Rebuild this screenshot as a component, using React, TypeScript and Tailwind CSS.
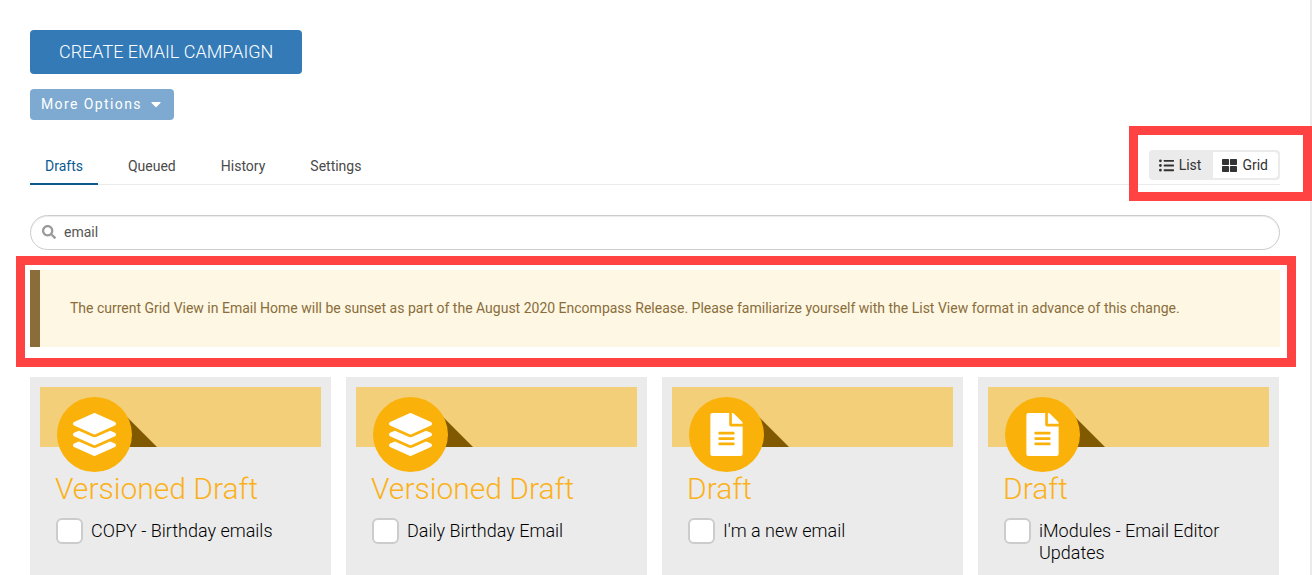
import { useState } from 'react'
import type { IconType } from 'react-icons'
import { FaCaretDown, FaFileAlt, FaLayerGroup, FaListUl, FaSearch, FaThLarge } from 'react-icons/fa'

interface Campaign {
  id: number
  name: string
  versioned: boolean
}

const TABS = ['Drafts', 'Queued', 'History', 'Settings']

const CAMPAIGNS: Campaign[] = [
  { id: 1, name: 'COPY - Birthday emails', versioned: true },
  { id: 2, name: 'Daily Birthday Email', versioned: true },
  { id: 3, name: "I'm a new email", versioned: false },
  { id: 4, name: 'iModules - Email Editor Updates', versioned: false },
]

export default function App() {
  const [tab, setTab] = useState('Drafts')
  const [query, setQuery] = useState('email')

  return (
    <div className="flex min-h-screen flex-col border-r-2 border-[#ebebeb] bg-white px-[30px] pt-[30px] font-['Roboto','Liberation_Sans',sans-serif] text-sm text-[#333]">
      <div className="flex flex-col items-start gap-[15px]">
        <button className="h-11 rounded bg-[#337ab7] px-[29px] text-lg font-light uppercase text-white">
          Create Email Campaign
        </button>
        <button className="flex h-[31px] items-center gap-1.5 rounded bg-[#7ea9d0] pl-[11px] pr-2.5 pb-0.5 tracking-widest text-white">
          More Options
          <FaCaretDown className="size-4" />
        </button>
      </div>

      {/* Tabs and view switch */}
      <div className="relative mt-[30px] flex h-[35px] justify-between border-b border-[#ebebeb]">
        <nav className="flex gap-[15px]">
          {TABS.map(t => (
            <button
              key={t}
              onClick={() => setTab(t)}
              className={`-mb-px border-b-2 px-[15px] pb-0.5 ${t === tab ? 'border-[#0b5a8f] text-[#0b5a8f]' : 'border-transparent text-[#4a4a4a]'}`}
            >
              {t}
            </button>
          ))}
        </nav>
        <div className="flex h-[30px] rounded bg-[#ebebeb] p-0.5">
          <ViewButton icon={FaListUl} label="List" />
          <ViewButton icon={FaThLarge} label="Grid" active />
        </div>
        <div className="pointer-events-none absolute -right-8 -top-6 h-[75px] w-[183px] border-9 border-[#ff4242]" />
      </div>

      <label className="mt-[30px] flex h-[35px] items-center gap-2 rounded-full border border-[#ccc] px-[11px] pb-0.5 shadow-[inset_0_1px_1px_rgba(0,0,0,0.08)]">
        <FaSearch className="size-3.5 text-[#999]" />
        <input
          type="text"
          aria-label="Search emails"
          value={query}
          onChange={e => setQuery(e.target.value)}
          className="flex-1 text-[#555] outline-none"
        />
      </label>

      {/* Sunset notice */}
      <div className="relative mt-5 border-l-10 border-[#8a6d3b] bg-[#fdf7e3] px-[30px] py-[28px] leading-[21px] text-[#8a6d3b]">
        The current Grid View in Email Home will be sunset as part of the August 2020 Encompass Release. Please familiarize yourself with the List View format in advance of this change.
        <div className="pointer-events-none absolute -bottom-5 -left-6 -right-4 -top-3.5 border-9 border-[#ff4242]" />
      </div>

      <div className="mt-[30px] mr-px grid flex-1 grid-cols-4 gap-[15px]">
        {CAMPAIGNS.map(c => (
          <CampaignCard key={c.id} campaign={c} />
        ))}
      </div>
    </div>
  )
}

function ViewButton({ icon: Icon, label, active = false }: {
  icon: IconType; label: string; active?: boolean
}) {
  return (
    <button className={`flex items-center gap-[5px] rounded-r-sm ${active ? 'bg-white pl-[9px] pr-2.5' : 'pl-2 pr-3'}`}>
      <Icon className="size-[15px]" />
      {label}
    </button>
  )
}

function CampaignCard({ campaign }: { campaign: Campaign }) {
  const Icon = campaign.versioned ? FaLayerGroup : FaFileAlt

  return (
    <div className="bg-[#ebebeb] p-2.5">
      <div className="relative h-[60px] bg-[#f3cf7a]">
        {/* Shadow cast by the badge */}
        <svg className="absolute bottom-0 left-[77px]" width="40" height="40" viewBox="0 0 40 40">
          <path d="M0 0L40 40H0Z" fill="#805900" />
        </svg>
        <div className="absolute left-[17px] top-2.5 flex size-[75px] items-center justify-center rounded-full bg-[#fab10a] pr-px text-white">
          <Icon className="size-[43px]" />
        </div>
      </div>
      <div className="px-[15px] pt-6">
        <h2 className="text-[30px] font-light leading-9 text-[#fbb11a]">
          {campaign.versioned ? 'Versioned Draft' : 'Draft'}
        </h2>
        <label className="mt-[11px] flex items-start gap-2 text-lg font-light leading-[22px] text-black">
          <input
            type="checkbox"
            className="ml-px h-[26px] w-[27px] shrink-0 appearance-none rounded-md border-2 border-[#ccc] bg-white checked:bg-[#337ab7]"
          />
          <span className="pt-0.5">{campaign.name}</span>
        </label>
      </div>
    </div>
  )
}
